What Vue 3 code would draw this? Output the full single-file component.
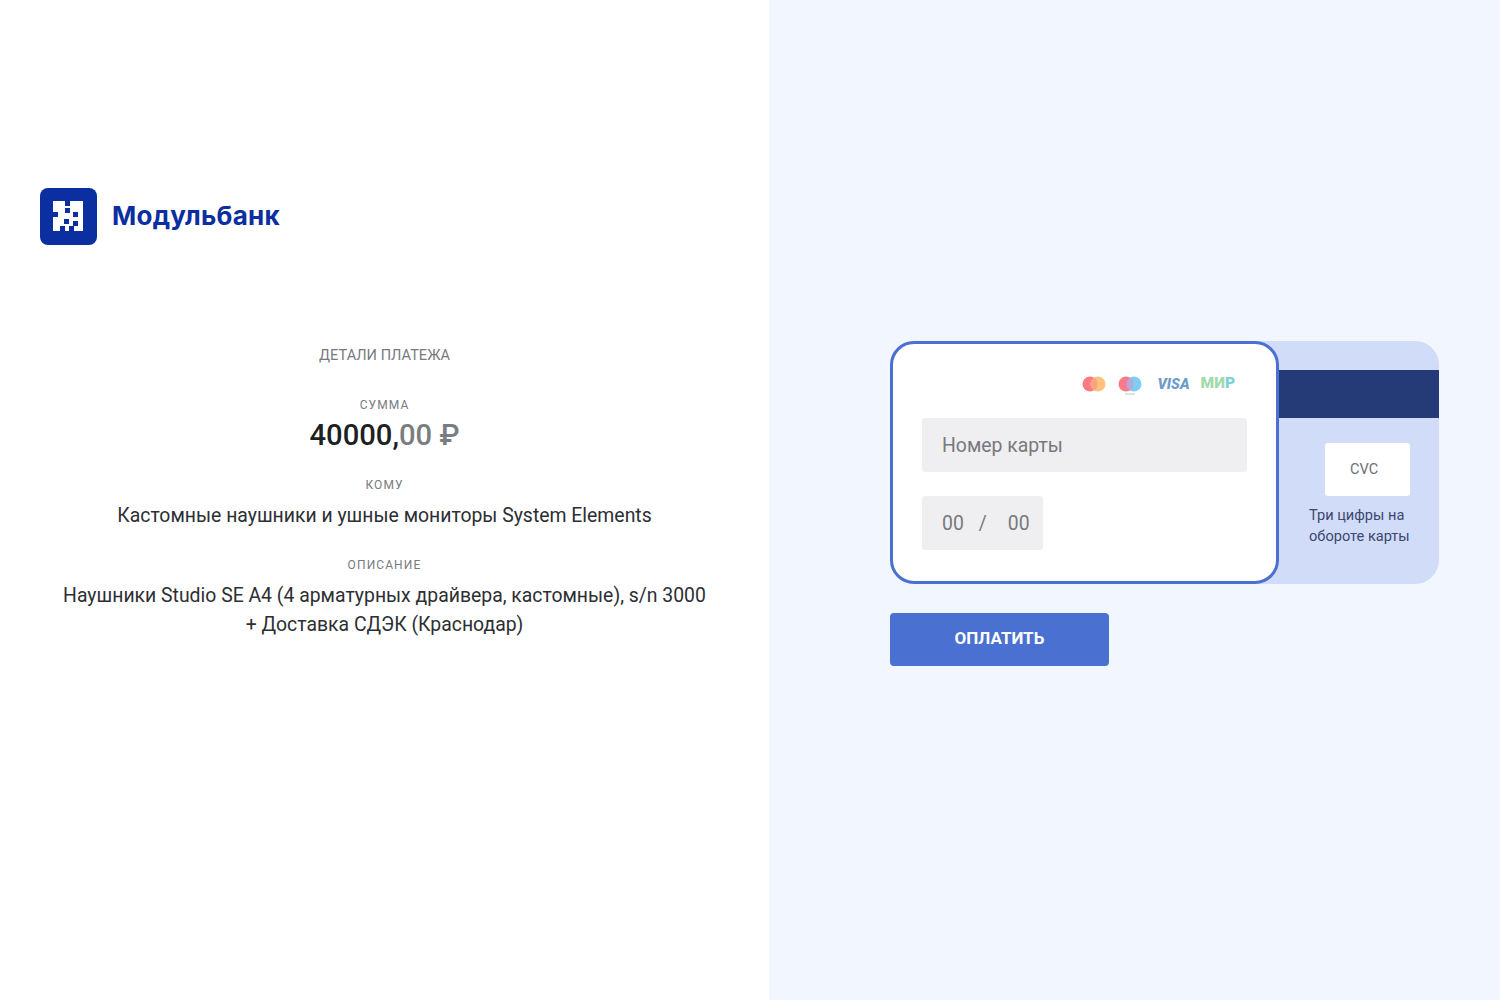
<script setup>
// blue notches cut out of the white block of the logo
const logoCells = [
  { x: 25, y: 13 },
  { x: 25, y: 20 },
  { x: 13, y: 24 },
  { x: 33, y: 24 },
  { x: 24, y: 31 },
  { x: 33, y: 33 },
  { x: 20, y: 38 },
  { x: 29, y: 38 }
];
</script>

<template>
  <div class="page">
    <section class="details">
      <div class="logo">
        <svg class="logo-mark" width="57" height="57" viewBox="0 0 57 57">
          <rect width="57" height="57" rx="8" fill="#0b2ea0" />
          <rect x="13" y="13" width="30" height="30" fill="#fff" />
          <rect v-for="(c, i) in logoCells" :key="i" :x="c.x" :y="c.y" width="5" height="5" fill="#0b2ea0" />
        </svg>
        <span class="logo-name">Модульбанк</span>
      </div>

      <div class="info">
        <h2 class="info-title">ДЕТАЛИ ПЛАТЕЖА</h2>
        <div class="label sum-label">СУММА</div>
        <div class="amount">40000,<span class="amount-light">00 ₽</span></div>
        <div class="label to-label">КОМУ</div>
        <div class="value">Кастомные наушники и ушные мониторы System Elements</div>
        <div class="label desc-label">ОПИСАНИЕ</div>
        <div class="value">Наушники Studio SE A4 (4 арматурных драйвера, кастомные), s/n 3000<br />+ Доставка СДЭК (Краснодар)</div>
      </div>
    </section>

    <section class="payment">
      <div class="cards">
        <div class="card-back">
          <div class="stripe"></div>
          <div class="cvc-box">CVC</div>
          <div class="cvc-hint">Три цифры на<br />обороте карты</div>
        </div>
        <div class="card-front">
          <div class="brands">
            <svg width="24" height="16" viewBox="0 0 24 16">
              <circle cx="8" cy="8" r="7.5" fill="#fa7a88" />
              <circle cx="16" cy="8" r="7.5" fill="#fdc27c" />
              <path d="M12 1.6a7.5 7.5 0 0 1 0 12.8a7.5 7.5 0 0 1 0-12.8z" fill="#fca480" />
            </svg>
            <svg class="maestro" width="24" height="20" viewBox="0 0 24 20">
              <circle cx="8" cy="8" r="7.5" fill="#fa7a88" />
              <circle cx="16" cy="8" r="7.5" fill="#7ccff3" />
              <path d="M12 1.6a7.5 7.5 0 0 1 0 12.8a7.5 7.5 0 0 1 0-12.8z" fill="#b9a6d6" />
              <rect x="7" y="17.5" width="10" height="1" fill="#c4c4c8" />
            </svg>
            <span class="visa">VISA</span>
            <span class="mir">МИ<span class="mir-end">Р</span></span>
          </div>
          <div class="field number">Номер карты</div>
          <div class="field expiry">
            <span>00</span>
            <span class="slash">/</span>
            <span>00</span>
          </div>
        </div>
      </div>
      <button class="pay">ОПЛАТИТЬ</button>
    </section>
  </div>
</template>

<style>
html, body {
  margin: 0;
  background: #fff;
}
</style>

<style scoped>
.page {
  display: flex;
  min-height: 1000px;
  font-family: Roboto, "Liberation Sans", sans-serif;
}

.details {
  width: 769px;
  box-sizing: border-box;
  padding-top: 188px;
  background: #fff;
}

.logo {
  display: flex;
  align-items: center;
  gap: 15px;
  height: 57px;
  padding-left: 40px;
}
.logo-mark {
  display: block;
}
.logo-name {
  margin-top: -2px;
  font-family: Inter, sans-serif;
  font-weight: 700;
  font-size: 26px;
  color: #0b2ea0;
  letter-spacing: 0.25px;
}

.info {
  margin-top: 100px;
  text-align: center;
}
.info-title {
  margin: 0;
  font-size: 14.6px;
  line-height: 20px;
  font-weight: 400;
  color: #777b80;
}
.label {
  font-size: 12px;
  line-height: 16px;
  letter-spacing: 1.1px;
  color: #777b80;
}
.sum-label {
  margin-top: 32px;
}
.to-label {
  margin-top: 22px;
}
.desc-label {
  margin-top: 27px;
}
.amount {
  margin-top: 2px;
  font-size: 29.2px;
  line-height: 40px;
  font-weight: 500;
  color: #1c1f24;
}
.amount-light {
  color: #797d82;
}
.value {
  margin-top: 8px;
  font-size: 19.4px;
  line-height: 29px;
  color: #2c2f33;
}

.payment {
  flex: 1;
  box-sizing: border-box;
  padding: 341px 61px 0 121px;
  background: #f2f6ff;
}

.cards {
  display: grid;
}
.card-back,
.card-front {
  grid-area: 1 / 1;
  box-sizing: border-box;
}
.card-back {
  height: 243px;
  padding-top: 29px;
  border-radius: 24px;
  background: #d1dcf8;
}
.stripe {
  height: 48px;
  background: #253b77;
}
.cvc-box {
  box-sizing: border-box;
  width: 85px;
  height: 53px;
  margin: 25px 0 0 435px;
  padding: 16px 0 0 25px;
  border-radius: 3px;
  background: #fff;
  font-size: 14.6px;
  line-height: 20px;
  color: #6d7074;
}
.cvc-hint {
  margin: 9px 0 0 419px;
  font-size: 14.6px;
  line-height: 21px;
  color: #3b4770;
}

.card-front {
  width: 389px;
  height: 243px;
  padding: 32px 29px 0;
  border: 3px solid #4a70d1;
  border-radius: 24px;
  background: #fff;
}
.brands {
  display: flex;
  align-items: flex-start;
  justify-content: flex-end;
  gap: 12px;
  height: 42px;
  padding-right: 12px;
}
.maestro {
  margin-right: 3px;
}
.visa {
  margin-right: -1px;
  font-size: 14.6px;
  line-height: 16px;
  font-weight: 900;
  font-style: italic;
  color: #6f9dca;
}
.mir {
  font-size: 15.5px;
  line-height: 15px;
  font-weight: 900;
  color: #9fdbab;
}
.mir-end {
  color: #7fcfd6;
}
.field {
  box-sizing: border-box;
  height: 54px;
  padding-left: 20px;
  border-radius: 3px;
  background: #efeff1;
  font-size: 19.4px;
  line-height: 56px;
  color: #77797c;
}
.number {
  width: 325px;
}
.expiry {
  display: flex;
  gap: 15px;
  width: 121px;
  margin-top: 24px;
}
.slash {
  margin-right: 6px;
}

.pay {
  display: block;
  width: 219px;
  height: 53px;
  margin-top: 29px;
  padding: 0 0 4px;
  border: 0;
  border-radius: 4px;
  background: #4a70d1;
  font-family: inherit;
  font-size: 17px;
  font-weight: 700;
  color: #fff;
}
</style>
